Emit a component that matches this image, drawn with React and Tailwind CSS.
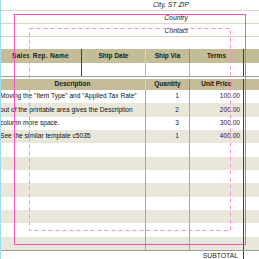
export default function App() {
  const data = [
    { d: 'Moving the "Item Type" and "Applied Tax Rate"', q: "1", p: "100.00" },
    { d: "out of the printable area gives the Description", q: "2", p: "200.00" },
    { d: "column more space.", q: "3", p: "300.00" },
    { d: "See the similar template c5035", q: "1", p: "400.00" },
  ];
  const heights = ["h-[13px]", "h-[14px]", "h-[13px]", "h-[13px]", "h-[14px]", "h-[13px]", "h-[13px]", "h-[14px]", "h-[13px]", "h-[13px]", "h-[14px]", "h-[13px]"];
  const rows = heights.map((h, i) => ({ h, ...(data[i] || { d: "", q: "", p: "" }) }));

  return (
    <div className="relative w-[259px] h-[259px] overflow-hidden bg-white font-['Liberation_Sans',Arial,sans-serif] text-[#1a1a1a]">
      {/* address block */}
      <div className="flex flex-col">
        <div className="flex h-[11px] border-b border-[#dcd7c3]">
          <div className="w-[190px] flex items-end justify-end pr-[1px] italic text-[6.8px] leading-none pb-[1px]">City, ST ZIP</div>
        </div>
        <div className="flex h-[13px] border-b border-[#dcd7c3]">
          <div className="w-[190px] flex items-end justify-end pr-[2px] italic text-[6.8px] leading-none pb-[1px]">Country</div>
        </div>
        <div className="flex h-[13px] border-b border-[#dcd7c3]">
          <div className="w-[190px] flex items-end justify-end pr-[2px] italic text-[6.8px] leading-none pb-[1px]">Contact</div>
        </div>
        <div className="h-[12px]" />
      </div>

      {/* sales rep table */}
      <div className="flex h-[14px] bg-[#c5bd97] text-[6.5px] font-bold leading-none">
        <div className="w-[82px] border-r border-[#404040] flex items-center justify-center tracking-[0.3px]">Sales Rep. Name</div>
        <div className="w-[64px] border-r border-[#dad6c6] flex items-center justify-center">Ship Date</div>
        <div className="w-[44px] border-r border-[#8c8c8c] flex items-center justify-center">Ship Via</div>
        <div className="w-[54px] border-r border-[#404040] flex items-center justify-center">Terms</div>
        <div className="flex-1" />
      </div>
      <div className="flex h-[14px] border-b border-[#9a9a9a]">
        <div className="w-[82px] border-r border-[#404040]" />
        <div className="w-[64px] border-r border-[#b5b5b5]" />
        <div className="w-[44px] border-r border-[#b5b5b5]" />
        <div className="w-[54px] border-r border-[#404040]" />
        <div className="flex-1" />
      </div>
      <div className="h-[2px]" />

      {/* items table header */}
      <div className="flex h-[11px] bg-[#c5bd97] text-[6.5px] font-bold leading-none">
        <div className="w-[146px] border-r border-[#dad6c6] flex items-center justify-center">Description</div>
        <div className="w-[44px] border-r border-[#8c8c8c] flex items-center justify-center">Quantity</div>
        <div className="w-[54px] border-r border-[#404040] flex items-center justify-center">Unit Price</div>
        <div className="flex-1" />
      </div>

      {/* items body */}
      <div className="flex flex-col border-b border-[#9a9a9a] text-[6.6px] leading-none">
        {rows.map((r, i) => (
          <div key={i} className={`flex ${r.h} ${i % 2 === 1 ? "bg-[#e9e6da]" : "bg-white"}`}>
            <div className="w-[146px] border-r border-[#a6a6a6] flex items-center whitespace-nowrap text-[#111]">{r.d}</div>
            <div className="w-[44px] border-r border-[#a6a6a6] flex items-center justify-end pr-[10px] text-[#24184f]">{r.q}</div>
            <div className="w-[54px] border-r border-[#404040] flex items-center justify-end pr-[3px] text-[#24184f]">{r.p}</div>
            <div className="flex-1" />
          </div>
        ))}
      </div>

      {/* subtotal */}
      <div className="flex h-[9px] text-[6.8px] leading-none">
        <div className="w-[146px]" />
        <div className="w-[44px]" />
        <div className="w-[54px] border-r border-[#404040] flex items-start justify-end pr-[5px] pt-[2px]">SUBTOTAL</div>
        <div className="flex-1" />
      </div>

      {/* left page edge */}
      <div className="absolute left-0 top-0 w-[1px] h-full bg-[#9fdcf2]" />

      {/* print area guides */}
      <svg className="absolute inset-0 pointer-events-none" width="259" height="259">
        <rect x="14.5" y="14.5" width="231" height="230" fill="none" stroke="#f552b8" strokeWidth="1" />
        <rect x="29.5" y="28.5" width="201" height="202" fill="none" stroke="#ff8ccf" strokeWidth="1" strokeDasharray="4 3" />
      </svg>
    </div>
  );
}
